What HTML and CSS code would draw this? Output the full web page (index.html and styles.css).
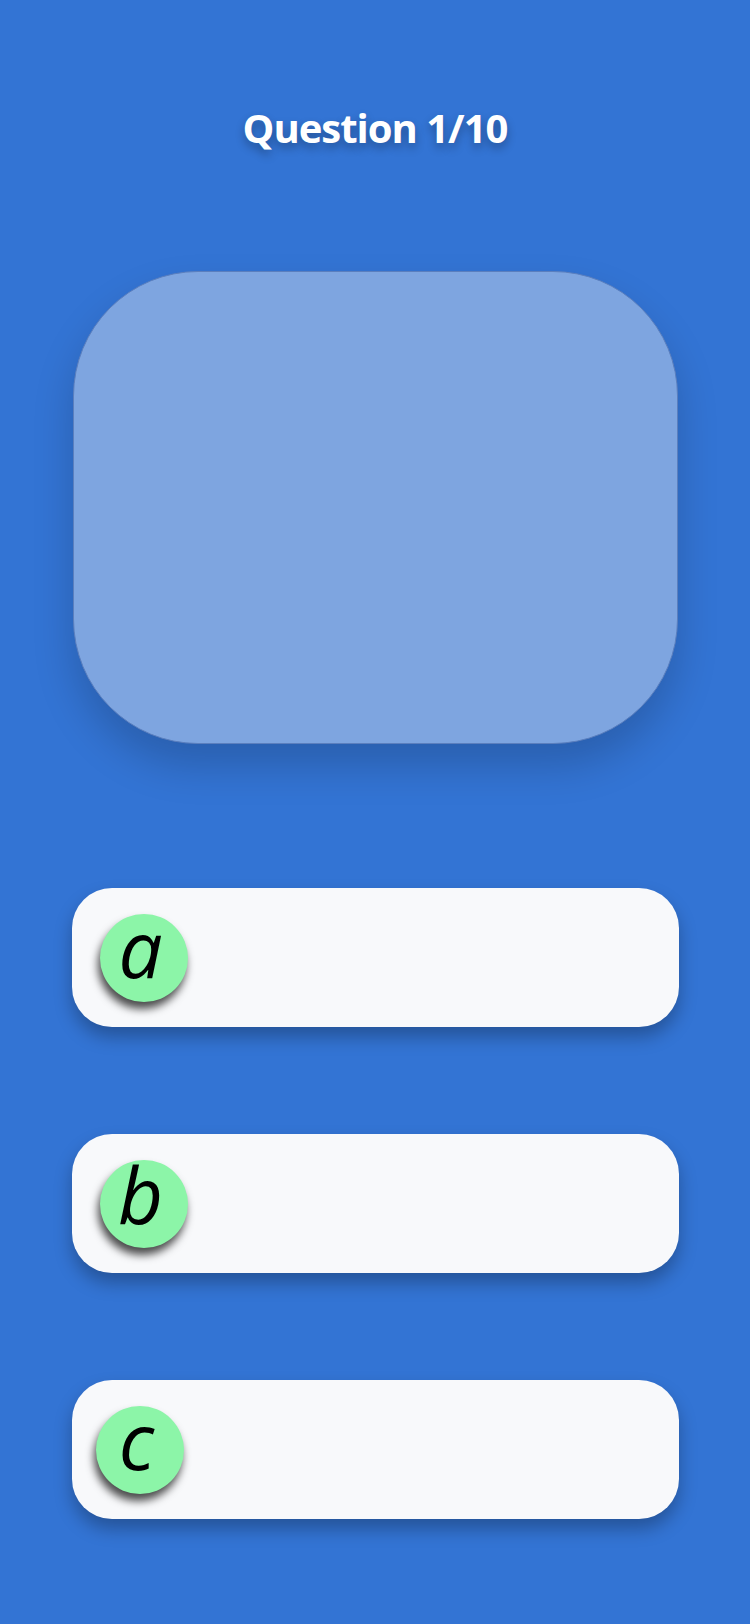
FILE: index.html
```html
<!DOCTYPE html>
<html lang="en">
<head>
<meta charset="utf-8">
<title>Quiz</title>
<link rel="stylesheet" href="styles.css">
</head>
<body>
<main class="quiz">
  <h1 class="quiz-title">Question 1/10</h1>
  <section class="question-card"></section>
  <ul class="answers">
    <li class="answer"><span class="answer-badge"><span class="answer-letter">a</span></span></li>
    <li class="answer"><span class="answer-badge"><span class="answer-letter">b</span></span></li>
    <li class="answer"><span class="answer-badge answer-badge--narrow"><span class="answer-letter">c</span></span></li>
  </ul>
</main>
</body>
</html>
```
FILE: styles.css
```css
html, body {
  margin: 0;
  padding: 0;
}
body {
  background: #3374d4;
  min-height: 1624px;
  font-family: "Open Sans", "Noto Sans", sans-serif;
}
.quiz {
  display: flex;
  flex-direction: column;
  align-items: center;
  padding-top: 104px;
}
.quiz-title {
  margin: 0;
  font-size: 40px;
  line-height: 48px;
  font-weight: 700;
  color: #ffffff;
  letter-spacing: -1px;
  text-shadow: 0 5px 10px rgba(0, 0, 0, 0.3);
}
.question-card {
  margin-top: 119px;
  width: 605px;
  height: 473px;
  box-sizing: border-box;
  background: #7ea5e0;
  border: 1.5px solid #5b7fbe;
  border-radius: 125px;
  box-shadow: 0 22px 40px rgba(0, 0, 0, 0.18);
}
.answers {
  list-style: none;
  margin: 144px 0 0;
  padding: 0;
  display: flex;
  flex-direction: column;
  gap: 107px;
}
.answer {
  width: 607px;
  height: 139px;
  background: #f8f9fb;
  border-radius: 40px;
  display: flex;
  align-items: center;
  box-shadow: 0 10px 18px rgba(0, 0, 0, 0.28);
}
.answer-badge {
  width: 88px;
  height: 88px;
  margin-left: 28px;
  border-radius: 50%;
  background: #8cf5a8;
  display: flex;
  align-items: center;
  justify-content: center;
  box-shadow: -2px 7px 8px rgba(0, 0, 0, 0.7);
}
.answer-badge--narrow {
  margin-left: 24px;
}
.answer-letter {
  font-family: "Open Sans", "Noto Sans", sans-serif;
  font-style: italic;
  font-weight: 500;
  font-size: 78px;
  line-height: 1;
  color: #000000;
  margin-bottom: 20px;
  margin-right: 6px;
}
```
